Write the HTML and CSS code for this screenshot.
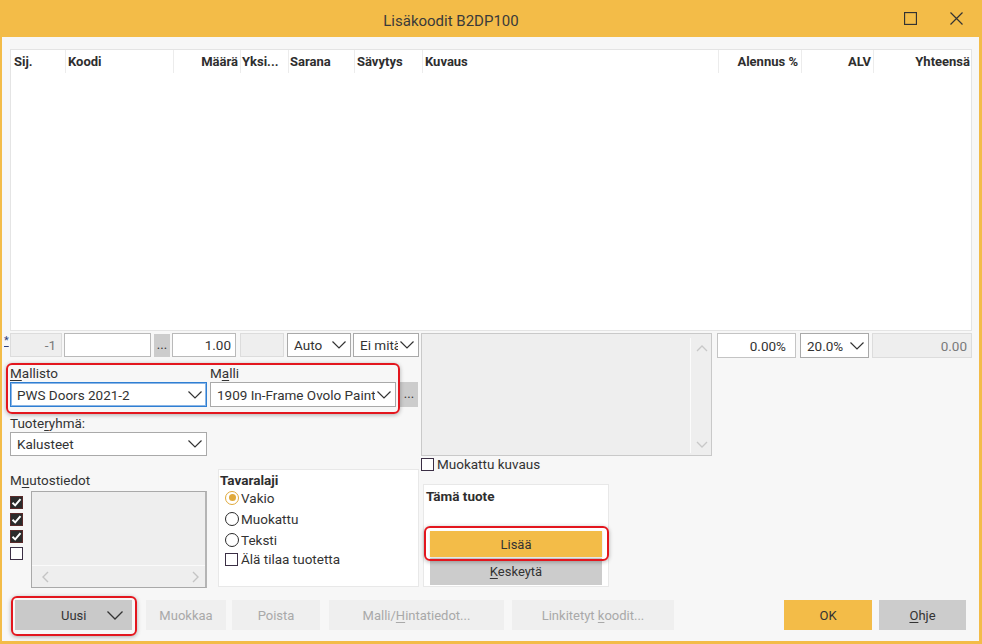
FILE: index.html
```html
<!DOCTYPE html>
<html lang="fi">
<head>
<meta charset="utf-8">
<title>Lisäkoodit B2DP100</title>
<link rel="stylesheet" href="styles.css">
</head>
<body>
<div class="window">
  <div class="titlebar">
    <div class="title">Lisäkoodit B2DP100</div>
    <div class="win-btn max"><svg width="13" height="13" viewBox="0 0 13 13"><rect x="0.5" y="0.5" width="12" height="12" fill="none" stroke="#333" stroke-width="1.3"/></svg></div>
    <div class="win-btn close"><svg width="13" height="13" viewBox="0 0 13 13"><path d="M0.5 0.5 L12.5 12.5 M12.5 0.5 L0.5 12.5" fill="none" stroke="#333" stroke-width="1.2"/></svg></div>
  </div>

  <div class="grid">
    <div class="grid-head">
      <div class="col c-sij">Sij.</div>
      <div class="col c-koodi">Koodi</div>
      <div class="col c-maara num">Määrä</div>
      <div class="col c-yksi">Yksi...</div>
      <div class="col c-sarana">Sarana</div>
      <div class="col c-savytys">Sävytys</div>
      <div class="col c-kuvaus">Kuvaus</div>
      <div class="col c-alennus num">Alennus %</div>
      <div class="col c-alv num">ALV</div>
      <div class="col c-yht num">Yhteensä</div>
    </div>
  </div>

  <div class="main">
    <div class="left">
      <div class="editrow">
        <div class="star"><u>*</u></div>
        <div class="box gray f-sij num">-1</div>
        <div class="box f-koodi"></div>
        <div class="dots f-dots">...</div>
        <div class="box f-maara num">1.00</div>
        <div class="box gray f-yksi"></div>
        <div class="sel f-auto"><span class="val">Auto</span><svg class="chev" width="14" height="8" viewBox="0 0 14 8"><path d="M0.5 0.5 L7 7 L13.5 0.5" fill="none" stroke="#333" stroke-width="1.2"/></svg></div>
        <div class="sel f-ei"><span class="val clip">Ei mitä</span><svg class="chev" width="14" height="8" viewBox="0 0 14 8"><path d="M0.5 0.5 L7 7 L13.5 0.5" fill="none" stroke="#333" stroke-width="1.2"/></svg></div>
      </div>

      <div class="mallisto">
        <div class="field f-mallisto">
          <div class="label"><u>M</u>allisto</div>
          <div class="sel focus"><span class="val">PWS Doors 2021-2</span><svg class="chev" width="14" height="8" viewBox="0 0 14 8"><path d="M0.5 0.5 L7 7 L13.5 0.5" fill="none" stroke="#333" stroke-width="1.2"/></svg></div>
        </div>
        <div class="field f-malli">
          <div class="label">M<u>a</u>lli</div>
          <div class="sel"><span class="val clip">1909 In-Frame Ovolo Painted</span><svg class="chev" width="14" height="8" viewBox="0 0 14 8"><path d="M0.5 0.5 L7 7 L13.5 0.5" fill="none" stroke="#333" stroke-width="1.2"/></svg></div>
        </div>
        <div class="dots f-dots2">...</div>
        <div class="annot annot-mallisto"></div>
      </div>

      <div class="tuote">
        <div class="label">Tuote<u>r</u>yhmä:</div>
        <div class="sel f-tuote"><span class="val">Kalusteet</span><svg class="chev" width="14" height="8" viewBox="0 0 14 8"><path d="M0.5 0.5 L7 7 L13.5 0.5" fill="none" stroke="#333" stroke-width="1.2"/></svg></div>
      </div>

      <div class="lower">
        <div class="muutos">
          <div class="label">M<u>u</u>utostiedot</div>
          <div class="muutos-row">
            <div class="checks">
              <div class="cb checked"><svg width="13" height="13" viewBox="0 0 13 13"><path d="M2.5 6.8 L5.2 9.4 L10.5 3.2" fill="none" stroke="#fff" stroke-width="2"/></svg></div>
              <div class="cb checked"><svg width="13" height="13" viewBox="0 0 13 13"><path d="M2.5 6.8 L5.2 9.4 L10.5 3.2" fill="none" stroke="#fff" stroke-width="2"/></svg></div>
              <div class="cb checked"><svg width="13" height="13" viewBox="0 0 13 13"><path d="M2.5 6.8 L5.2 9.4 L10.5 3.2" fill="none" stroke="#fff" stroke-width="2"/></svg></div>
              <div class="cb"></div>
            </div>
            <div class="listbox">
              <div class="list-area"></div>
              <div class="hscroll">
                <svg width="8" height="12" viewBox="0 0 8 12"><path d="M7 1 L2 6 L7 11" fill="none" stroke="#c4c4c4" stroke-width="1.4"/></svg>
                <svg width="8" height="12" viewBox="0 0 8 12"><path d="M1 1 L6 6 L1 11" fill="none" stroke="#c4c4c4" stroke-width="1.4"/></svg>
              </div>
            </div>
          </div>
        </div>
        <div class="panel tavaralaji">
          <div class="panel-title">Tavaralaji</div>
          <div class="opt"><span class="radio on"><span class="dot"></span></span><span>Vakio</span></div>
          <div class="opt"><span class="radio"></span><span>Muokattu</span></div>
          <div class="opt"><span class="radio"></span><span>Teksti</span></div>
          <div class="opt opt-cb"><span class="cb"></span><span>Älä tilaa tuotetta</span></div>
        </div>
      </div>
    </div>

    <div class="middle">
      <div class="textarea">
        <div class="ta-body"></div>
        <div class="vscroll">
          <svg width="12" height="8" viewBox="0 0 12 8"><path d="M1 7 L6 2 L11 7" fill="none" stroke="#c8c8c8" stroke-width="1.3"/></svg>
          <svg width="12" height="8" viewBox="0 0 12 8"><path d="M1 1 L6 6 L11 1" fill="none" stroke="#c8c8c8" stroke-width="1.3"/></svg>
        </div>
      </div>
      <div class="cbrow"><span class="cb"></span><span>Muokattu kuvaus</span></div>
      <div class="panel tama">
        <div class="panel-title">Tämä tuote</div>
        <div class="btn yellow lisaa">Lisää<div class="annot annot-lisaa"></div></div>
        <div class="btn grayb keskeyta"><span><u>K</u>eskeytä</span></div>
      </div>
    </div>

    <div class="right">
      <div class="box f-alennus num">0.00%</div>
      <div class="sel f-alv"><span class="val">20.0%</span><svg class="chev" width="14" height="8" viewBox="0 0 14 8"><path d="M0.5 0.5 L7 7 L13.5 0.5" fill="none" stroke="#333" stroke-width="1.2"/></svg></div>
      <div class="box gray f-yht num">0.00</div>
    </div>
  </div>

  <div class="buttonbar">
    <div class="btn uusi"><span>Uusi</span><svg width="16" height="9" viewBox="0 0 16 9"><path d="M0.5 0.5 L8 8 L15.5 0.5" fill="none" stroke="#333" stroke-width="1.3"/></svg><div class="annot annot-uusi"></div></div>
    <div class="btn disabled b-muokkaa">Muokkaa</div>
    <div class="btn disabled b-poista">Poista</div>
    <div class="btn disabled b-malli"><span>Malli/<u>H</u>intatiedot...</span></div>
    <div class="btn disabled b-link"><span>Linkitetyt <u>k</u>oodit...</span></div>
    <div class="btn yellow b-ok">OK</div>
    <div class="btn grayb b-ohje"><span><u>O</u>hje</span></div>
  </div>
</div>
</body>
</html>
```

FILE: styles.css
```css
* { box-sizing: border-box; }
html, body { margin: 0; padding: 0; }
body {
  font-family: Roboto, "Liberation Sans", sans-serif;
  font-size: 13.5px;
  color: #333;
  background: #f7f7f7;
}
u { text-decoration: underline; text-underline-offset: 2px; }

.window {
  width: 982px;
  height: 644px;
  background: #f7f7f7;
  border-left: 2px solid #f3bc48;
  border-right: 3px solid #f3bc48;
  border-bottom: 3px solid #f3bc48;
  overflow: hidden;
}

/* Title bar */
.titlebar {
  height: 37px;
  background: #f3bc48;
  display: flex;
  align-items: center;
}
.title {
  width: 898px;
  text-align: center;
  font-size: 15px;
  color: #3a3a3a;
  padding-top: 4px;
}
.win-btn { display: flex; align-items: center; height: 13px; }
.win-btn.max { margin-left: 4px; }
.win-btn.close { margin-left: 33px; }

/* Grid */
.grid {
  margin: 12px 0 0 8px;
  width: 962px;
  height: 282px;
  background: #fff;
  border: 1px solid #e4e4e4;
}
.grid-head {
  display: flex;
  height: 23px;
  font-weight: bold;
  font-size: 13px;
  color: #2e2e2e;
}
.col {
  border-left: 1px solid #ececec;
  line-height: 23px;
  white-space: nowrap;
  overflow: hidden;
}
.col.num { text-align: right; }
.c-sij { width: 54px; border-left: none; padding-left: 3px; }
.c-koodi { width: 108px; padding-left: 2px; }
.c-maara { width: 67px; padding-right: 2px; }
.c-yksi { width: 48px; padding-left: 1px; }
.c-sarana { width: 66px; padding-left: 1px; }
.c-savytys { width: 68px; padding-left: 2px; }
.c-kuvaus { width: 296px; padding-left: 2px; }
.c-alennus { width: 83px; padding-right: 3px; }
.c-alv { width: 72px; padding-right: 2px; }
.c-yht { width: 98px; padding-right: 1px; }

/* Main area */
.main {
  display: flex;
  margin-top: 2px;
  height: 255px;
}
.left { width: 419px; }

.editrow { display: flex; height: 24px; }
.star {
  width: 8px;
  font-size: 11px;
  color: #2f3f7a;
  padding-left: 2px;
  line-height: 16px;
}
.box {
  background: #fff;
  border: 1px solid #b9b9b9;
  height: 100%;
  display: flex;
  align-items: center;
  padding: 0 4px;
  white-space: nowrap;
}
.box.num { justify-content: flex-end; }
.box.gray { background: #eeeeee; border-color: #dcdcdc; color: #7a7a7a; }
.dots {
  background: #cccccc;
  display: flex;
  align-items: center;
  justify-content: center;
  color: #333;
  font-size: 13px;
  line-height: 1;
  padding-bottom: 3px;
}
.f-sij { width: 52px; padding-right: 5px; }
.f-koodi { width: 87px; margin-left: 2px; }
.f-dots { width: 16px; margin-left: 3px; margin-top: 1px; }
.f-maara { width: 64px; margin-left: 2px; padding-right: 4px; }
.f-yksi { width: 44px; margin-left: 4px; }
.f-auto { width: 64px; margin-left: 3px; }
.f-ei { width: 66px; margin-left: 2px; }

.sel {
  display: flex;
  align-items: center;
  background: #fff;
  border: 1px solid #a9a9a9;
  height: 100%;
  padding-left: 6px;
  padding-right: 4px;
  white-space: nowrap;
  overflow: hidden;
}
.sel .val { flex: 1 1 auto; overflow: hidden; }
.sel .chev { flex: 0 0 auto; margin-left: 2px; }
.sel.focus { border: 1px solid #2f7fd3; box-shadow: inset 0 0 0 1px #8bb6e6; }

.label { height: 15px; line-height: 15px; white-space: nowrap; }

.mallisto {
  position: relative;
  display: flex;
  margin: 9px 0 0 8px;
  width: 408px;
}
.field { display: flex; flex-direction: column; }
.field .sel { height: 25px; margin-top: 1px; }
.f-mallisto { width: 197px; }
.f-malli { width: 186px; margin-left: 3px; }
.f-dots2 { width: 18px; height: 25px; margin-left: 4px; align-self: flex-end; }

.annot {
  position: absolute;
  border: 2px solid #e3161e;
  border-radius: 6px;
  box-shadow: 0 1px 4px rgba(0, 0, 0, 0.3);
  pointer-events: none;
}
.annot-mallisto { left: -4px; top: -3px; width: 394px; height: 51px; }

.tuote { margin: 9px 0 0 8px; width: 197px; }
.f-tuote { height: 24px; margin-top: 1px; }

.lower { display: flex; margin: 13px 0 0 8px; }
.muutos { width: 197px; }
.muutos .label { margin-top: 4px; }
.muutos-row { display: flex; margin-top: 3px; }
.checks {
  width: 14px;
  margin-top: 5px;
  display: flex;
  flex-direction: column;
  gap: 4px;
}
.cb {
  display: inline-block;
  width: 13px;
  height: 13px;
  border: 1px solid #3b2f45;
  background: #fff;
  flex: 0 0 auto;
}
.cb.checked { background: #2b2b2b; border-color: #5a2a2a; }
.cb svg { display: block; margin: -1px; }
.listbox {
  margin-left: 7px;
  width: 177px;
  height: 97px;
  background: #eeeeee;
  border: 1px solid #a9a9a9;
  border-right: 2px solid #b4b4b4;
  display: flex;
  flex-direction: column;
}
.list-area { flex: 1; }
.hscroll {
  height: 22px;
  border-top: 1px solid #fafafa;
  display: flex;
  align-items: center;
  justify-content: space-between;
  padding: 0 5px 0 9px;
}

.panel {
  background: #fff;
  border: 1px solid #e8e8e8;
}
.panel-title { font-weight: bold; font-size: 13.5px; line-height: 16px; color: #2e2e2e; }
.tavaralaji {
  width: 201px;
  height: 118px;
  margin-left: 11px;
  padding: 2px 0 0 1px;
}
.tavaralaji .panel-title { margin-bottom: -1px; }
.opt {
  display: flex;
  align-items: center;
  height: 21px;
  padding-left: 5px;
  gap: 2px;
  white-space: nowrap;
}
.opt-cb { height: 18px; gap: 3px; padding-left: 5px; }
.radio {
  width: 14px;
  height: 14px;
  border-radius: 50%;
  border: 1.3px solid #2a2a2a;
  display: inline-flex;
  align-items: center;
  justify-content: center;
  background: #fff;
}
.radio.on { border-color: #e0a93b; }
.radio .dot { width: 7px; height: 7px; border-radius: 50%; background: #e0a93b; }

/* Middle */
.middle { width: 296px; }
.textarea {
  width: 291px;
  height: 123px;
  background: #eeeeee;
  border: 1px solid #c9c9c9;
  display: flex;
}
.ta-body { flex: 1; }
.vscroll {
  width: 21px;
  margin: 4px 0 2px 0;
  border-left: 1px solid #fbfbfb;
  display: flex;
  flex-direction: column;
  justify-content: space-between;
  align-items: center;
  padding: 6px 0 4px 2px;
}
.cbrow {
  display: flex;
  align-items: center;
  gap: 3px;
  margin-top: 1px;
  height: 14px;
  white-space: nowrap;
}
.tama {
  width: 186px;
  height: 103px;
  margin: 13px 0 0 2px;
  padding: 3px 0 0 2px;
}
.btn {
  display: flex;
  align-items: center;
  justify-content: center;
  font-size: 13px;
  white-space: nowrap;
}
.btn.yellow { background: #f3bc48; color: #333; }
.btn.grayb { background: #cccccc; color: #333; }
.btn.disabled { background: #efefef; color: #a9a9a9; }
.lisaa {
  position: relative;
  width: 172px;
  height: 26px;
  margin: 27px 0 0 4px;
  box-shadow: 0 1px 2px rgba(0,0,0,0.15);
}
.annot-lisaa { left: -6px; top: -5px; width: 185px; height: 35px; }
.keskeyta { width: 172px; height: 27px; margin: 1px 0 0 4px; }

/* Right */
.right { display: flex; height: 25px; }
.f-alennus { width: 79px; padding-right: 9px; border-color: #c4c4c4; }
.f-alv { width: 69px; margin-left: 4px; }
.f-yht { width: 100px; margin-left: 3px; color: #8a8a8a; padding-right: 4px; background: #efefef; }

/* Button bar */
.buttonbar {
  display: flex;
  height: 30px;
  margin-top: 12px;
  padding-right: 13px;
}
.uusi {
  position: relative;
  width: 117px;
  margin-left: 13px;
  background: #c9c9c9;
  justify-content: flex-start;
  padding-left: 46px;
  gap: 21px;
  color: #333;
}
.annot-uusi { left: -4px; top: -4px; width: 126px; height: 40px; }
.b-muokkaa { width: 80px; margin-left: 14px; }
.b-poista { width: 88px; margin-left: 6px; }
.b-malli { width: 175px; margin-left: 9px; }
.b-link { width: 162px; margin-left: 8px; }
.b-ok { width: 88px; margin-left: auto; }
.b-ohje { width: 87px; margin-left: 7px; }
```
